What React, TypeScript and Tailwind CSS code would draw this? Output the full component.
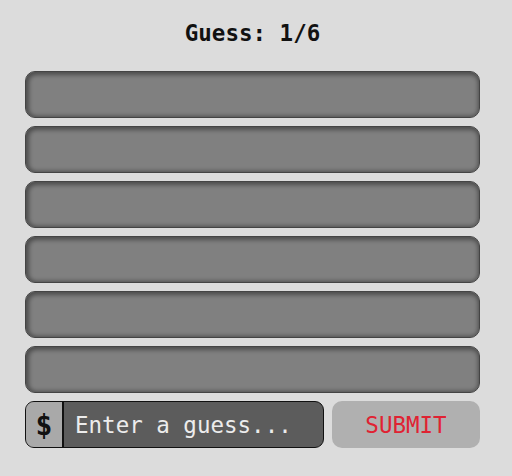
const rows = [0, 1, 2, 3, 4, 5];

export default function App() {
  return (
    <div
      className="w-[512px] h-[476px] bg-[#dcdcdc] overflow-hidden"
      style={{ fontFamily: '"DejaVu Sans Mono", "Liberation Mono", monospace' }}
    >
      <div className="ml-[25px] w-[455px] flex flex-col">
        {/* Header */}
        <div className="h-[71px] pt-[19px] text-center">
          <span className="text-[22.5px] leading-[28px] font-bold text-[#111]">Guess: 1/6</span>
        </div>

        {/* Guess rows */}
        <div className="flex flex-col gap-[8px]">
          {rows.map((r) => (
            <div
              key={r}
              className="h-[47px] rounded-[10px] bg-[#808080] border border-[#444] shadow-[inset_1px_1px_4px_2px_rgba(0,0,0,0.4)]"
            />
          ))}
        </div>

        {/* Input row */}
        <div className="mt-[8px] flex gap-[8px]">
          <div className="w-[299px] h-[47px] flex rounded-[9px] border border-[#111] overflow-hidden bg-[#5c5c5c]">
            <div className="w-[38px] bg-[#a9a9a9] border-r-2 border-[#111] flex items-center justify-center pt-[2px] text-[28px] font-bold text-[#111]">
              $
            </div>
            <div className="flex-1 flex items-center pl-[11px] pt-[3px] text-[22.5px] text-[#ececec]">
              Enter a guess...
            </div>
          </div>
          <button className="w-[148px] h-[47px] rounded-[10px] bg-[#b0b0b0] text-[#e02232] text-[22.5px] flex items-center justify-center pt-[2px]">
            SUBMIT
          </button>
        </div>
      </div>
    </div>
  );
}
